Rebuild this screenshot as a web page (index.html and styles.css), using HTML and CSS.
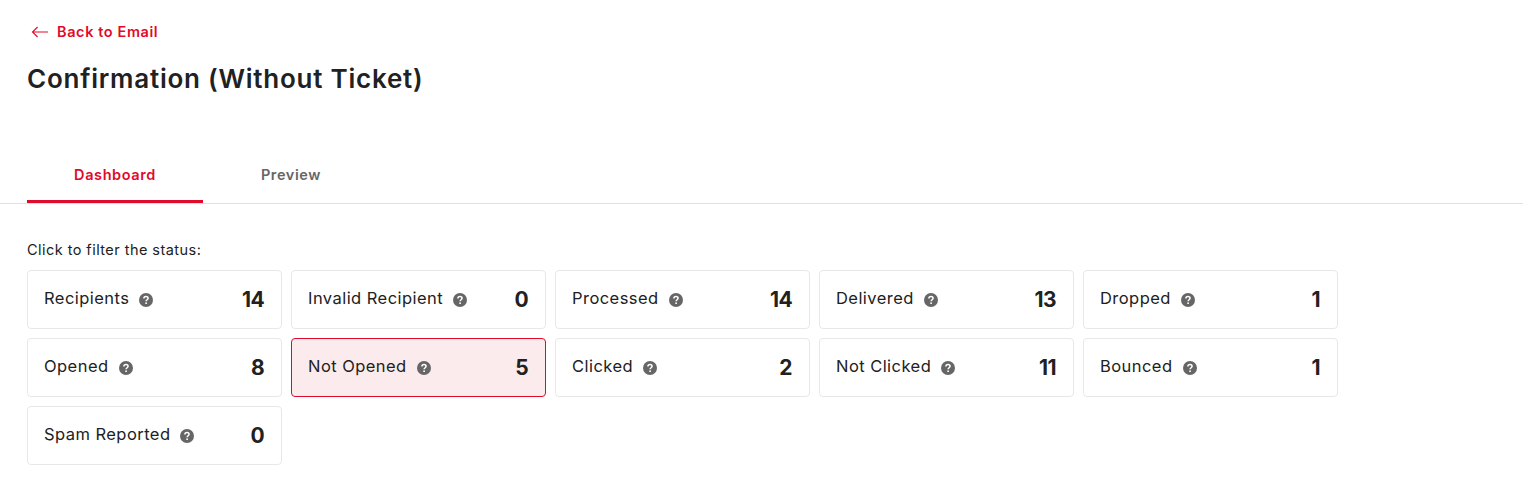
FILE: index.html
```html
<!DOCTYPE html>
<html lang="en">
<head>
    <meta charset="UTF-8">
    <title>Confirmation (Without Ticket)</title>
    <link rel="stylesheet" href="styles.css">
</head>
<body>
    <svg class="icon-defs" width="0" height="0">
        <symbol id="help" viewBox="0 0 14 14">
            <circle cx="7" cy="7" r="7" fill="#666"/>
            <path d="M4.9 5.4C4.9 4.2 5.8 3.5 7 3.5C8.2 3.5 9.1 4.2 9.1 5.3C9.1 6.7 7.1 6.8 7.1 8.3" fill="none" stroke="#fff" stroke-width="1.5"/>
            <rect x="6.3" y="9.4" width="1.6" height="1.6" fill="#fff"/>
        </symbol>
    </svg>

    <header class="page-head">
        <a class="back-link" href="#">
            <svg class="back-icon" viewBox="0 0 18 12" width="18" height="12">
                <path d="M17 6H1.5M6.6 1L1.5 6L6.6 11" fill="none" stroke="#e00a2b" stroke-width="1.1"/>
            </svg>
            Back to Email
        </a>
        <h1>Confirmation (Without Ticket)</h1>
    </header>

    <nav class="tabs">
        <a class="tab active" href="#">Dashboard</a>
        <a class="tab" href="#">Preview</a>
    </nav>

    <main class="content">
        <p class="hint">Click to filter the status:</p>
        <div class="status-grid">
            <div class="status-card"><span class="status-label">Recipients <svg class="help"><use href="#help"/></svg></span><b class="status-count">14</b></div>
            <div class="status-card"><span class="status-label">Invalid Recipient <svg class="help"><use href="#help"/></svg></span><b class="status-count">0</b></div>
            <div class="status-card"><span class="status-label">Processed <svg class="help"><use href="#help"/></svg></span><b class="status-count">14</b></div>
            <div class="status-card"><span class="status-label">Delivered <svg class="help"><use href="#help"/></svg></span><b class="status-count">13</b></div>
            <div class="status-card"><span class="status-label">Dropped <svg class="help"><use href="#help"/></svg></span><b class="status-count">1</b></div>
            <div class="status-card"><span class="status-label">Opened <svg class="help"><use href="#help"/></svg></span><b class="status-count">8</b></div>
            <div class="status-card selected"><span class="status-label">Not Opened <svg class="help"><use href="#help"/></svg></span><b class="status-count">5</b></div>
            <div class="status-card"><span class="status-label">Clicked <svg class="help"><use href="#help"/></svg></span><b class="status-count">2</b></div>
            <div class="status-card"><span class="status-label">Not Clicked <svg class="help"><use href="#help"/></svg></span><b class="status-count">11</b></div>
            <div class="status-card"><span class="status-label">Bounced <svg class="help"><use href="#help"/></svg></span><b class="status-count">1</b></div>
            <div class="status-card"><span class="status-label">Spam Reported <svg class="help"><use href="#help"/></svg></span><b class="status-count">0</b></div>
        </div>
    </main>
</body>
</html>
```

FILE: styles.css
```css
body {
    margin: 0;
    font-family: "Inter", "Liberation Sans", sans-serif;
    background-color: #fff;
    color: #212121;
}

.icon-defs {
    display: block;
    height: 0;
}

.page-head {
    padding: 21px 27px 0;
    height: 130px;
    box-sizing: border-box;
}

.back-link {
    display: flex;
    align-items: center;
    gap: 8px;
    height: 20px;
    padding-left: 4px;
    color: #e00a2b;
    font-size: 14.5px;
    font-weight: 600;
    letter-spacing: 0.6px;
    text-decoration: none;
}

.back-icon {
    margin-top: 2px;
}

.page-head h1 {
    margin: 21px 0 0;
    font-size: 26px;
    line-height: 34px;
    font-weight: 600;
    letter-spacing: 0.76px;
}

.tabs {
    display: flex;
    padding-left: 27px;
    height: 73px;
    border-bottom: 1px solid #e0e0e0;
}

.tab {
    display: flex;
    align-items: center;
    justify-content: center;
    width: 176px;
    padding-top: 15px;
    box-sizing: border-box;
    color: #666;
    font-size: 14.5px;
    font-weight: 600;
    letter-spacing: 0.6px;
    text-decoration: none;
}

.tab.active {
    color: #e00a2b;
    padding-top: 18px;
    border-bottom: 3px solid #e00a2b;
}

.content {
    padding: 0 27px;
}

.hint {
    margin: 37px 0 11px;
    font-size: 14.5px;
    line-height: 18px;
    letter-spacing: 0.45px;
}

.status-grid {
    display: grid;
    grid-template-columns: repeat(5, 255px);
    grid-auto-rows: 59px;
    gap: 9px;
}

.status-card {
    display: flex;
    align-items: center;
    justify-content: space-between;
    padding: 0 17px 0 16px;
    box-sizing: border-box;
    border: 1px solid #e8e8e8;
    border-radius: 4px;
}

.status-card.selected {
    background-color: #fcebec;
    border-color: #e00a2b;
}

.status-label {
    display: flex;
    align-items: center;
    gap: 10px;
    font-size: 16.5px;
    letter-spacing: 0.45px;
    padding-bottom: 3px;
}

.help {
    width: 14px;
    height: 14px;
    margin-top: 3px;
}

.status-count {
    font-size: 21px;
    font-weight: 700;
    letter-spacing: -0.6px;
}
```
